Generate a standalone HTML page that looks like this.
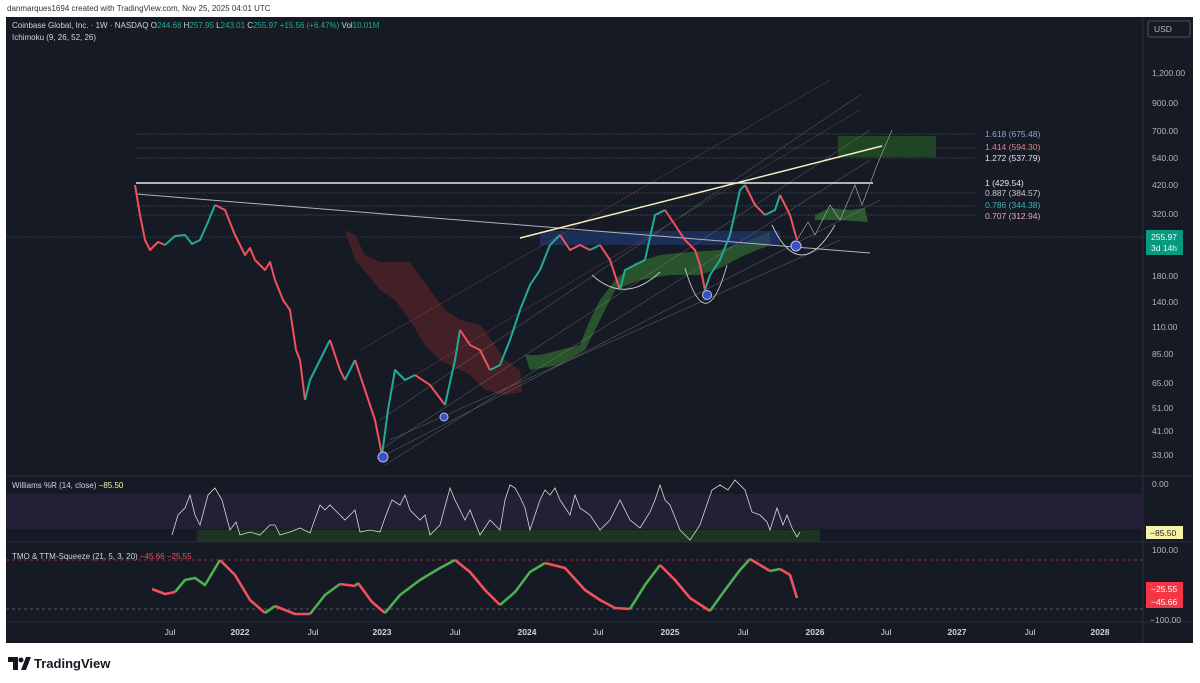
<!DOCTYPE html>
<html><head><meta charset="utf-8"><style>
html,body{margin:0;padding:0;background:#fff;width:1200px;height:683px;overflow:hidden;font-family:"Liberation Sans",sans-serif}
svg{position:absolute;left:0;top:0}
text{font-family:"Liberation Sans",sans-serif}
</style></head><body>
<svg width="1200" height="683" viewBox="0 0 1200 683">
<text x="7" y="11" font-size="8" fill="#333">danmarques1694 created with TradingView.com, Nov 25, 2025 04:01 UTC</text>
<rect x="6" y="17" width="1187" height="626" fill="#161a25"/>
<line x1="1143" y1="17" x2="1143" y2="643" stroke="#2a2e39"/>
<line x1="6" y1="476" x2="1193" y2="476" stroke="#2a2e39"/>
<line x1="6" y1="542" x2="1193" y2="542" stroke="#2a2e39"/>
<line x1="6" y1="622" x2="1193" y2="622" stroke="#2a2e39"/>
<text x="12" y="28" font-size="8" fill="#d1d4dc">Coinbase Global, Inc. · 1W · NASDAQ <tspan>O</tspan><tspan fill="#22ab94">244.68</tspan> H<tspan fill="#22ab94">257.95</tspan> L<tspan fill="#22ab94">243.01</tspan> C<tspan fill="#22ab94">255.97 +15.56 (+6.47%)</tspan> Vol<tspan fill="#22ab94">10.01M</tspan></text>
<text x="12" y="40" font-size="8" fill="#d1d4dc">Ichimoku (9, 26, 52, 26)</text>
<g font-size="8.5" fill="#b2b5be">
<rect x="1148" y="21" width="42" height="16" fill="#161a25" stroke="#50535e" rx="2"/>
<text x="1154" y="32">USD</text>
<text x="1152" y="76">1,200.00</text><text x="1152" y="106">900.00</text><text x="1152" y="134">700.00</text>
<text x="1152" y="161">540.00</text><text x="1152" y="188">420.00</text><text x="1152" y="217">320.00</text>
<text x="1152" y="279">180.00</text><text x="1152" y="305">140.00</text><text x="1152" y="330">110.00</text>
<text x="1152" y="357">85.00</text><text x="1152" y="386">65.00</text><text x="1152" y="411">51.00</text>
<text x="1152" y="434">41.00</text><text x="1152" y="458">33.00</text>
<text x="1152" y="487">0.00</text><text x="1152" y="553">100.00</text><text x="1150" y="623">−100.00</text>
</g>
<rect x="1146" y="230" width="37" height="25" fill="#089981"/>
<text x="1151" y="240" font-size="8.5" fill="#e8fff8">255.97</text><text x="1151" y="251" font-size="8.5" fill="#e8fff8">3d 14h</text>
<rect x="1146" y="526" width="37" height="13" fill="#f7f3a8"/><text x="1150" y="536" font-size="8.5" fill="#222">−85.50</text>
<rect x="1146" y="582" width="37" height="26" fill="#f23645"/>
<text x="1151" y="592" font-size="8.5" fill="#fff">−25.55</text><text x="1151" y="605" font-size="8.5" fill="#fff">−45.66</text>
<g font-size="8.5" fill="#d1d4dc" text-anchor="middle">
<text x="170" y="635">Jul</text><text x="240" y="635" font-weight="bold">2022</text><text x="313" y="635">Jul</text>
<text x="382" y="635" font-weight="bold">2023</text><text x="455" y="635">Jul</text><text x="527" y="635" font-weight="bold">2024</text>
<text x="598" y="635">Jul</text><text x="670" y="635" font-weight="bold">2025</text><text x="743" y="635">Jul</text>
<text x="815" y="635" font-weight="bold">2026</text><text x="886" y="635">Jul</text><text x="957" y="635" font-weight="bold">2027</text>
<text x="1030" y="635">Jul</text><text x="1100" y="635" font-weight="bold">2028</text>
</g>
<g stroke="#787b86" stroke-width="0.6" stroke-dasharray="1.5 1.5">
<line x1="136" y1="134" x2="975" y2="134"/><line x1="136" y1="148" x2="975" y2="148"/><line x1="136" y1="158" x2="975" y2="158"/>
<line x1="136" y1="193" x2="975" y2="193"/><line x1="136" y1="206" x2="975" y2="206" stroke="#3a8a8a"/><line x1="136" y1="215" x2="975" y2="215"/>
<line x1="6" y1="237" x2="1143" y2="237" stroke="#2f7f6f"/>
</g>
<g font-size="8.5">
<text x="985" y="137" fill="#8fa6d8">1.618 (675.48)</text><text x="985" y="150" fill="#e0828c">1.414 (594.30)</text>
<text x="985" y="161" fill="#e6e6e6">1.272 (537.79)</text><text x="985" y="186" fill="#e6e6e6">1 (429.54)</text>
<text x="985" y="196" fill="#c8c8c8">0.887 (384.57)</text><text x="985" y="208" fill="#3bb3c3">0.786 (344.38)</text>
<text x="985" y="219" fill="#e8a8b8">0.707 (312.94)</text>
</g>
<path d="M345 230 L355 235 L365 255 L380 262 L410 262 L430 290 L445 310 L460 320 L480 325 L495 345 L505 360 L520 370 L522 392 L505 395 L485 390 L470 375 L460 370 L440 360 L425 345 L410 320 L395 300 L380 290 L368 275 L355 260 Z" fill="#4a2226" opacity="0.85"/>
<path d="M525 355 L540 355 L560 350 L580 345 L590 320 L600 300 L615 280 L635 263 L660 255 L690 252 L720 250 L750 240 L770 232 L770 245 L745 255 L720 268 L700 275 L670 275 L640 280 L615 290 L600 320 L585 350 L560 365 L530 370 Z" fill="#2b5a2e" opacity="0.9"/>
<path d="M815 215 L830 208 L850 210 L865 208 L868 222 L840 220 L815 220 Z" fill="#2b5a2e"/>
<rect x="838" y="136" width="98" height="21" fill="#204a26" opacity="0.9"/>
<rect x="540" y="231" width="240" height="14" fill="#223a7a" opacity="0.6"/>
<g stroke="#8a8f9a" stroke-width="0.5" opacity="0.7">
<line x1="380" y1="450" x2="870" y2="130"/><line x1="385" y1="465" x2="870" y2="160"/><line x1="380" y1="420" x2="860" y2="95"/>
<line x1="390" y1="390" x2="860" y2="110" stroke="#a05060"/><line x1="360" y1="350" x2="830" y2="80" stroke="#a05060"/>
<line x1="385" y1="455" x2="880" y2="200"/><line x1="390" y1="440" x2="840" y2="240"/>
</g>
<line x1="136" y1="183" x2="873" y2="183" stroke="#e8e8e8" stroke-width="1.4"/>
<line x1="136" y1="194" x2="870" y2="253" stroke="#b0b3bb" stroke-width="1"/>
<line x1="520" y1="238" x2="882" y2="146" stroke="#f5f0c0" stroke-width="1.5"/>
<g fill="none" stroke="#c8c8c8" stroke-width="0.9">
<path d="M592 275 Q625 305 660 272"/><path d="M685 268 Q706 340 727 265"/><path d="M772 225 Q800 285 835 225"/>
<path d="M797 240 L808 222 L815 235 L830 205 L840 220 L855 185 L862 205 L877 165 L892 130" stroke="#9aa0aa" stroke-width="0.7"/>
</g>
<g fill="none" stroke-width="2" stroke-linejoin="round">
<polyline stroke="#f0515d" points="135,185 140,215 145,240 150,250 158,242 165,245"/>
<polyline stroke="#22ab94" points="165,245 175,236 185,235 192,244 200,240 208,222 215,205"/>
<polyline stroke="#f0515d" points="215,205 225,210 235,235 245,255 250,248 255,260 265,270 270,262 275,280 283,300 290,310 296,350 300,360 305,400"/>
<polyline stroke="#22ab94" points="305,400 310,380 320,360 330,340"/>
<polyline stroke="#f0515d" points="330,340 340,370 345,380"/>
<polyline stroke="#22ab94" points="345,380 355,360"/>
<polyline stroke="#f0515d" points="355,360 365,390 375,420 382,455"/>
<polyline stroke="#22ab94" points="382,455 388,410 395,370 405,380 415,375"/>
<polyline stroke="#f0515d" points="415,375 430,385 445,405"/>
<polyline stroke="#22ab94" points="445,405 455,360 460,330"/>
<polyline stroke="#f0515d" points="460,330 470,345 480,350 490,370"/>
<polyline stroke="#22ab94" points="490,370 500,365 510,340 520,310 530,285 540,270 550,245 560,235"/>
<polyline stroke="#f0515d" points="560,235 570,250 580,245 590,250"/>
<polyline stroke="#22ab94" points="590,250 600,245"/>
<polyline stroke="#f0515d" points="600,245 610,260 620,290"/>
<polyline stroke="#22ab94" points="620,290 625,270 635,265 645,260 655,215 665,210"/>
<polyline stroke="#f0515d" points="665,210 675,225 685,240 695,250 700,265 705,290"/>
<polyline stroke="#22ab94" points="705,290 710,275 720,260 730,235 740,190 745,185"/>
<polyline stroke="#f0515d" points="745,185 755,205 765,215"/>
<polyline stroke="#22ab94" points="765,215 775,210 780,195"/>
<polyline stroke="#f0515d" points="780,195 790,215 797,240"/>
</g>
<g fill="#3d4fc4" stroke="#b8c2f0" stroke-width="1">
<circle cx="383" cy="457" r="5"/><circle cx="444" cy="417" r="4"/><circle cx="707" cy="295" r="4.5"/><circle cx="796" cy="246" r="5"/>
</g>
<rect x="6" y="494" width="1137" height="35" fill="#221f36"/>
<rect x="197" y="530" width="623" height="12" fill="#1e3322"/>
<text x="12" y="488" font-size="8" fill="#d1d4dc">Williams %R (14, close) <tspan fill="#f7f3a8">−85.50</tspan></text>
<polyline fill="none" stroke="#d8d8d8" stroke-width="0.8" points="172,535 178,515 185,508 190,495 195,515 200,525 208,495 215,488 222,500 230,530 236,522 240,535 250,532 260,535 270,525 275,525 280,535 290,532 300,528 310,533 320,505 325,510 330,505 340,515 345,520 355,510 360,532 370,530 380,532 386,515 392,500 400,505 405,495 410,510 420,520 425,515 430,535 440,525 450,488 455,500 465,520 470,510 480,535 490,520 500,530 505,500 510,485 515,488 520,497 525,508 530,530 540,500 545,490 550,495 555,488 560,500 570,515 575,495 580,508 590,515 600,530 610,520 620,500 625,510 630,520 640,528 650,512 655,500 660,485 665,500 670,505 680,530 690,540 700,525 705,510 712,490 720,485 728,490 735,480 745,490 752,512 760,515 767,522 770,530 777,508 783,525 787,515 792,528 797,537 800,532"/>
<text x="12" y="559" font-size="8" fill="#d1d4dc">TMO &amp; TTM-Squeeze (21, 5, 3, 20) <tspan fill="#f0515d">−45.66 −25.55</tspan></text>
<line x1="6" y1="560" x2="1143" y2="560" stroke="#a04055" stroke-width="0.7" stroke-dasharray="3 3"/>
<line x1="6" y1="609" x2="1143" y2="609" stroke="#6a6d78" stroke-width="0.7" stroke-dasharray="3 3"/>
<g fill="none" stroke-width="2.6" stroke-linejoin="round">
<polyline stroke="#f0515d" points="152,589 165,594 175,592"/>
<polyline stroke="#4caf50" points="175,592 185,580 195,578 205,585 220,560"/>
<polyline stroke="#f0515d" points="220,560 235,575 250,600 265,613"/>
<polyline stroke="#4caf50" points="265,613 275,606"/>
<polyline stroke="#f0515d" points="275,606 295,614 310,614"/>
<polyline stroke="#4caf50" points="310,614 325,595 340,584"/>
<polyline stroke="#f0515d" points="340,584 355,586"/>
<polyline stroke="#4caf50" points="355,586 358,583"/>
<polyline stroke="#f0515d" points="358,583 372,602 385,613"/>
<polyline stroke="#4caf50" points="385,613 400,595 420,580 440,568 455,560"/>
<polyline stroke="#f0515d" points="455,560 470,572 485,590 500,605"/>
<polyline stroke="#4caf50" points="500,605 515,592 530,572 545,563"/>
<polyline stroke="#f0515d" points="545,563 565,568 585,590 600,600 615,608 630,609"/>
<polyline stroke="#4caf50" points="630,609 645,585 660,565"/>
<polyline stroke="#f0515d" points="660,565 675,580 690,598 710,611"/>
<polyline stroke="#4caf50" points="710,611 725,590 740,570 750,559"/>
<polyline stroke="#f0515d" points="750,559 760,565 770,571"/>
<polyline stroke="#4caf50" points="770,571 780,569"/>
<polyline stroke="#f0515d" points="780,569 790,575 797,598"/>
</g>
<g fill="#131722">
<path d="M8 657 h10 v13 h-5 v-8 h-5 z"/><circle cx="21" cy="660" r="2.5"/><path d="M21 670 l5 -13 h5 l-5 13 z"/>
</g>
<text x="34" y="668" font-size="13" font-weight="bold" fill="#131722">TradingView</text>
</svg>
</body></html>
